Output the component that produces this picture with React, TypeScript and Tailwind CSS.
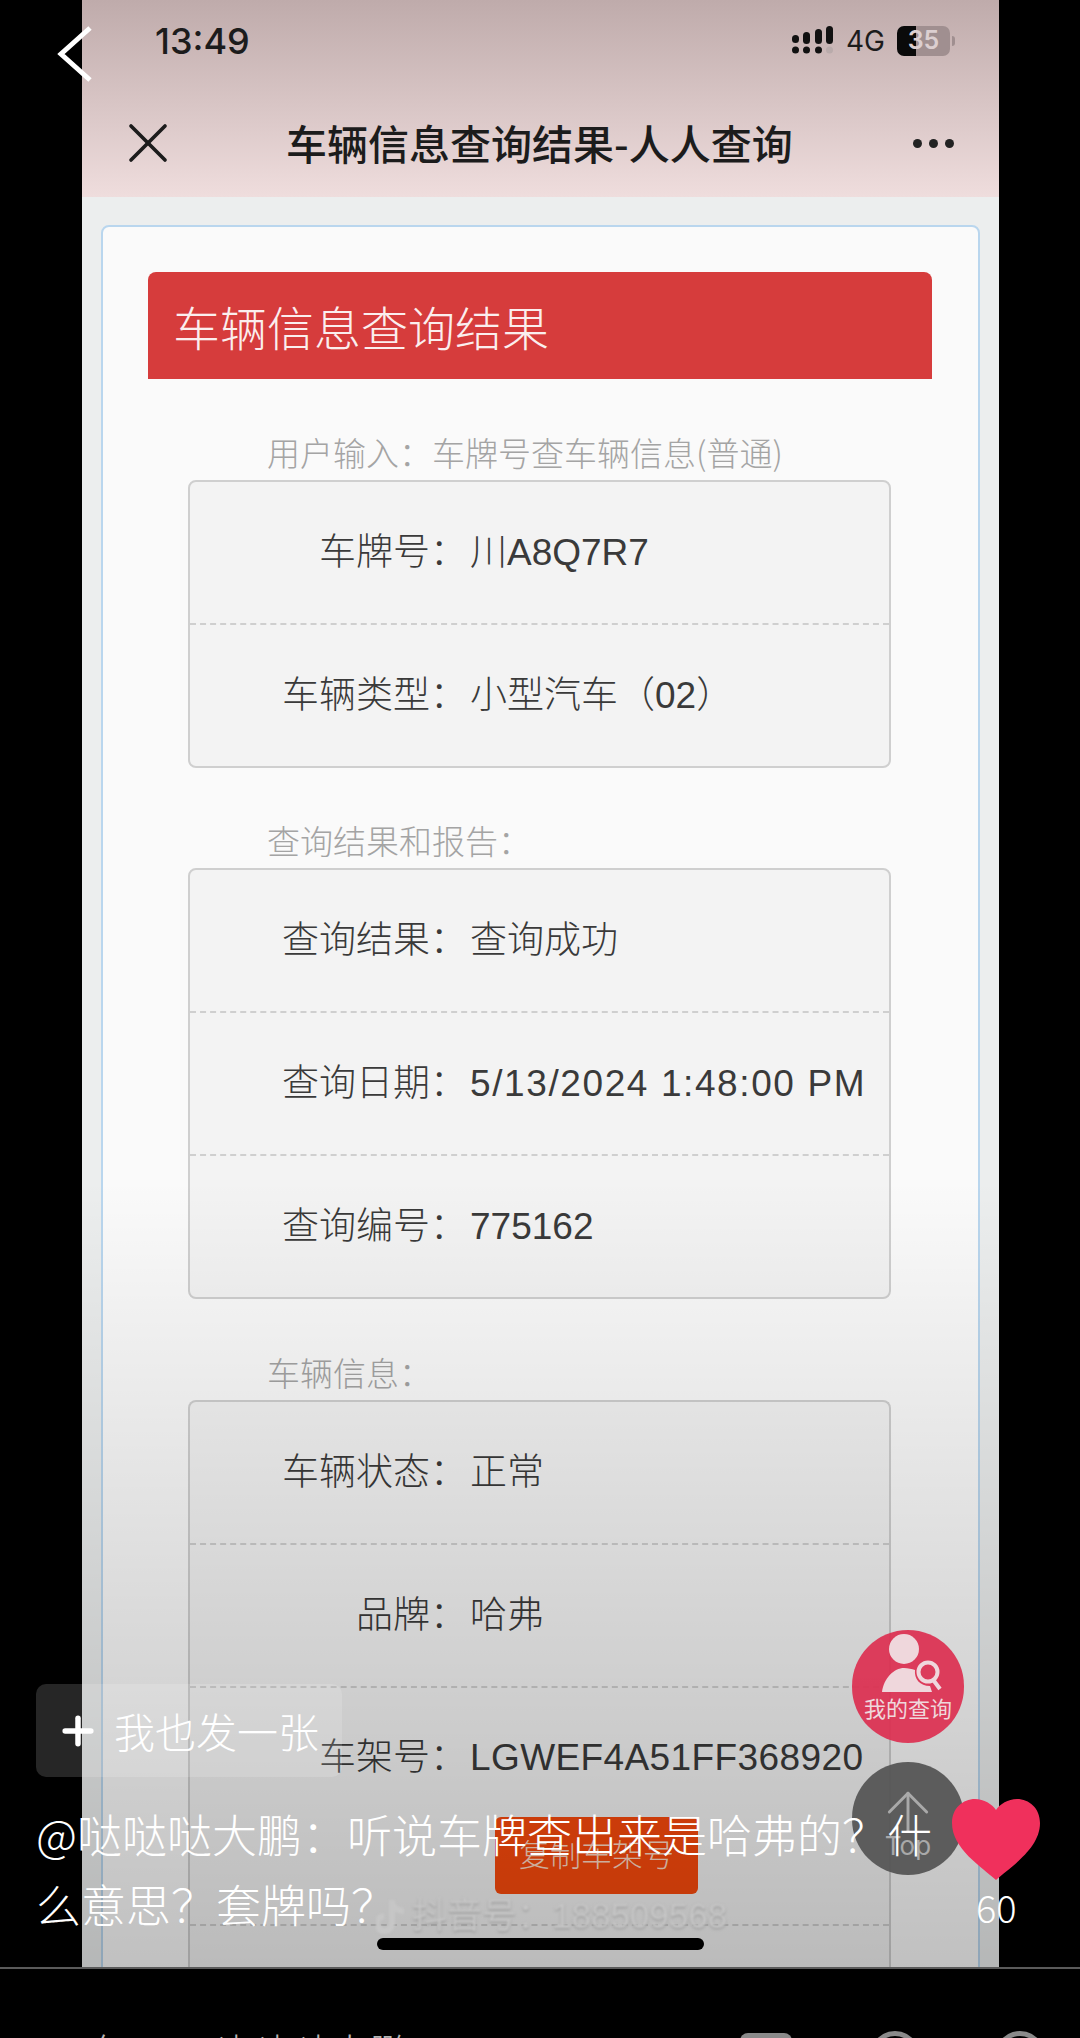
import { Plus, X, ArrowUp } from "lucide-react";

const cjk = "font-['Noto_Sans_CJK_SC','Liberation_Sans',sans-serif]";
const mixed = "font-['Liberation_Sans','Noto_Sans_CJK_SC',sans-serif]";

const Row = ({ label, value, wide }: { label: string; value: string; wide?: boolean }) => (
  <div className="flex h-[141px] items-center">
    <span className="w-[277px] shrink-0 text-right whitespace-nowrap">{label}：</span>
    <span className={`ml-[3px] whitespace-nowrap ${wide ? "tracking-[1.6px]" : ""}`}>{value}</span>
  </div>
);

const Box = ({ children }: { children: React.ReactNode }) => (
  <div className={`mr-[87px] ml-[85px] rounded-[8px] border-2 border-[#cfcfcf] bg-[#f3f3f3] text-[37px] leading-none font-light text-[#3a3a3a] ${mixed}`}>
    {children}
  </div>
);

const Dash = () => <div className="border-t-2 border-dashed border-[#cfcfcf]" />;

const Label = ({ children }: { children: React.ReactNode }) => (
  <div className="ml-[164px] h-[56px] text-[33px] leading-[56px] font-light whitespace-nowrap text-[#a4a4a4]">
    {children}
  </div>
);

const Signal = () => (
  <svg width="42" height="30" viewBox="0 0 42 30" fill="#111">
    <rect x="0" y="9" width="7" height="8" rx="3.5" />
    <rect x="11" y="6" width="7" height="12" rx="3.5" />
    <rect x="23" y="3" width="7" height="15" rx="3.5" />
    <rect x="34" y="0" width="7" height="18" rx="3.5" />
    <circle cx="3.5" cy="24" r="3.5" />
    <circle cx="14.5" cy="24" r="3.5" />
    <circle cx="26.5" cy="24" r="3.5" />
    <circle cx="37.5" cy="24" r="3.5" fill="#b9abab" />
  </svg>
);

const Person = () => (
  <svg width="60" height="58" viewBox="0 0 60 58" fill="#efd7dc" className="ml-[8px] shrink-0">
    <circle cx="22" cy="15" r="15" />
    <path d="M0 58 C2 44 12 34 22 34 C26 34 30 35 33 36 C32 45 38 52 48 52 L50 58 Z" />
    <circle cx="46" cy="38" r="9.5" fill="none" stroke="#efd7dc" strokeWidth="4" />
    <path d="M52 47 L58 55" stroke="#efd7dc" strokeWidth="4" />
  </svg>
);

export default function App() {
  return (
    <div className={`relative h-[2038px] w-[1080px] overflow-hidden bg-black ${cjk}`}>
      <div className="relative mx-[82px] h-[1968px] w-[917px] overflow-hidden bg-[#eceeee]">
        {/* wechat style header */}
        <div className="h-[197px] bg-gradient-to-b from-[#bfabab] to-[#efdddd] text-[#1c1c1c]">
          <div className="flex h-[82px] items-center justify-between pr-[49px] pl-[73px]">
            <span className="font-['Inter',sans-serif] text-[36px] font-medium">13:49</span>
            <div className="flex items-center gap-[12px]">
              <Signal />
              <span className="font-['Inter',sans-serif] text-[28px]">4G</span>
              <div className="relative flex h-[30px] w-[53px] items-center justify-center rounded-[7px] bg-[linear-gradient(90deg,#0a0a0a_36%,#a08f90_36%)] font-['Inter',sans-serif] text-[25px] font-semibold text-[#dccfd0]">
                35
                <i className="absolute top-[10px] -right-[5px] h-[10px] w-[3px] rounded-r-full bg-[#a08f90]" />
              </div>
            </div>
          </div>
          <div className="mt-[29px] flex h-[64px] items-center pr-[45px] pl-[32px]">
            <X size={68} strokeWidth={1.3} className="shrink-0" />
            <span className="ml-[104px] flex-1 text-[41px] font-medium whitespace-nowrap">
              车辆信息查询结果-人人查询
            </span>
            <span className="flex gap-[7px]">
              <i className="h-[9px] w-[9px] rounded-full bg-[#222]" />
              <i className="h-[9px] w-[9px] rounded-full bg-[#222]" />
              <i className="h-[9px] w-[9px] rounded-full bg-[#222]" />
            </span>
          </div>
        </div>

        {/* card */}
        <div className="mx-[19px] mt-[28px] rounded-t-[8px] border-2 border-[#b9d6ee] bg-[#fafafa] pt-[45px]">
          <div className="mr-[46px] ml-[45px] flex h-[107px] items-center rounded-t-[8px] bg-[#d63c3c] pl-[25px] text-[47px] leading-none font-light text-[#fbeeee]">
            车辆信息查询结果
          </div>
          <div className="mt-[45px]">
            <Label>用户输入：车牌号查车辆信息(普通)</Label>
          </div>
          <Box>
            <Row label="车牌号" value="川A8Q7R7" />
            <Dash />
            <Row label="车辆类型" value="小型汽车（02）" />
          </Box>
          <div className="mt-[44px]">
            <Label>查询结果和报告：</Label>
          </div>
          <Box>
            <Row label="查询结果" value="查询成功" />
            <Dash />
            <Row label="查询日期" value="5/13/2024 1:48:00 PM" wide />
            <Dash />
            <Row label="查询编号" value="775162" />
          </Box>
          <div className="mt-[45px]">
            <Label>车辆信息：</Label>
          </div>
          <div className={`mr-[87px] ml-[85px] rounded-t-[8px] border-2 border-b-0 border-[#cfcfcf] bg-[#f3f3f3] text-[37px] leading-none font-light text-[#3a3a3a] ${mixed}`}>
            <Row label="车辆状态" value="正常" />
            <Dash />
            <Row label="品牌" value="哈弗" />
            <Dash />
            <div className="flex h-[236px] flex-col">
              <div className="flex h-[129px] items-center pt-[10px]">
                <span className="w-[277px] shrink-0 text-right">车架号：</span>
                <span className="ml-[3px] tracking-[0.4px]">LGWEF4A51FF368920</span>
              </div>
              <div className="ml-[305px] flex h-[77px] w-[203px] items-center justify-center rounded-[6px] bg-[#fa4a0c] text-[31px] font-light text-[#ffd9c4]">
                复制车架号
              </div>
            </div>
            <Dash />
            <div className="h-[60px]" />
          </div>
        </div>

        {/* dim gradient over the lower part of the screenshot */}
        <div className="absolute inset-x-0 top-[1180px] bottom-0 bg-gradient-to-b from-transparent to-[#0000003b]" />
      </div>

      {/* video overlays */}
      <svg className="absolute top-[26px] left-[57px]" width="36" height="56" viewBox="0 0 36 56" fill="none" stroke="#fff" strokeWidth="5">
        <path d="M33 2 L4 28 L33 54" />
      </svg>

      <div className="absolute top-[1630px] left-[852px] flex h-[113px] w-[112px] flex-col items-center rounded-full bg-[#dc2f50eb] pt-[4px]">
        <Person />
        <span className="mt-[2px] text-[22px] leading-[26px] whitespace-nowrap text-[#efd7dc]">我的查询</span>
      </div>
      <div className="absolute top-[1762px] left-[852px] flex h-[113px] w-[112px] flex-col items-center rounded-full bg-[#555555f0] pt-[18px] text-[#a9a9a9]">
        <ArrowUp size={64} strokeWidth={1.1} className="shrink-0" />
        <span className="-mt-[11px] font-['Inter',sans-serif] text-[26px] leading-none">Top</span>
      </div>

      <div className={`absolute top-[1896px] left-[376px] flex items-center text-[35px] leading-[40px] whitespace-nowrap text-[#c6c6c6] blur-[1px] [text-shadow:0_1px_2px_#8c8c8c] ${mixed}`}>
        <svg width="30" height="36" viewBox="0 0 30 36" fill="none" stroke="#c6c6c6" strokeWidth="6" className="mr-[6px]">
          <path d="M16 2 V25 A7.500 7.500 0 1 1 8 18 M16 4 C17 10 22 13 28 13" />
        </svg>
        抖音号：188509568
      </div>

      <div className="absolute top-[1684px] left-[36px] flex h-[93px] w-[306px] items-center rounded-[10px] bg-[#ffffff26] pl-[20px] text-[41px] font-light text-white">
        <Plus size={44} strokeWidth={3} className="shrink-0" />
        <span className="ml-[14px] whitespace-nowrap">我也发一张</span>
      </div>

      <div className="absolute top-[1799px] left-[36px] w-[905px] text-[45px] leading-[70px] font-light text-white">
        @哒哒哒大鹏：听说车牌查出来是哈弗的？什么意思？套牌吗？
      </div>

      <svg className="absolute top-[1799px] left-[952px]" width="88" height="81" viewBox="0 0 88 81" fill="#f0305c">
        <path d="M44 81 C30 68 0 50 0 24 C0 9 11 0 23 0 C32 0 40 5 44 11 C48 5 56 0 65 0 C77 0 88 9 88 24 C88 50 58 68 44 81 Z" />
      </svg>
      <div className="absolute top-[1885px] left-[976px] text-[38px] leading-[44px] font-light text-white">60</div>

      <div className="absolute top-[1938px] left-[377px] h-[12px] w-[327px] rounded-full bg-black" />
      <div className="absolute top-[1967px] left-0 h-[2px] w-[1080px] bg-[#5a5a5a]" />

      <div className="absolute top-[2027px] left-[50px] flex text-[41px] leading-[48px] font-light whitespace-nowrap text-[#b5b5b5]">
        <span className="w-[156px]">三年</span>
        <span>哒哒哒大鹏</span>
      </div>
      <div className="absolute top-[2033px] left-[740px] h-[30px] w-[52px] rounded-[8px] bg-[#8a8a8a]" />
      <div className="absolute top-[2031px] left-[870px] h-[50px] w-[50px] rounded-full border-[5px] border-[#8a8a8a]" />
      <div className="absolute top-[2031px] left-[995px] h-[50px] w-[50px] rounded-full border-[5px] border-[#8a8a8a]" />
    </div>
  );
}
